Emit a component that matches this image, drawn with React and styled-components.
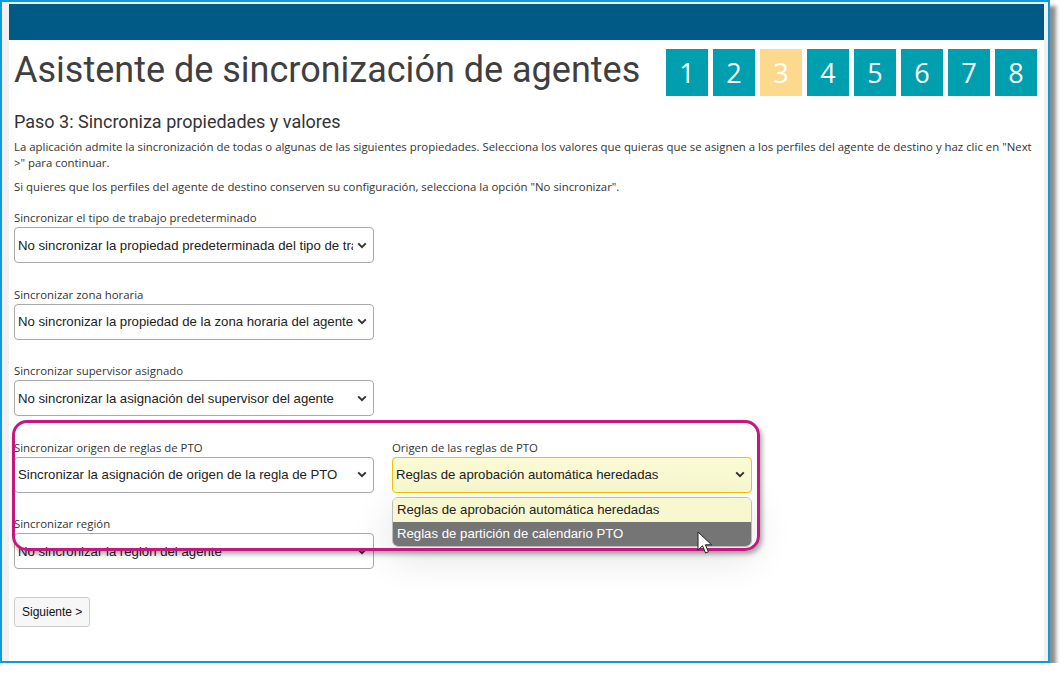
import React from 'react';
import styled, {createGlobalStyle} from 'styled-components';

const GlobalStyle = createGlobalStyle`
    html, body {
        margin: 0;
        padding: 0;
        background: #ffffff;
    }
    * {
        box-sizing: border-box;
    }
`

const steps = [1, 2, 3, 4, 5, 6, 7, 8];

const Chevron = () => (
    <svg width="10" height="7" viewBox="0 0 10 7">
        <path d="M1.2 1.4 L5 5.2 L8.8 1.4" fill="none" stroke="#333" strokeWidth="2" />
    </svg>
);

const Cursor = () => (
    <svg width="18" height="26" viewBox="0 0 18 26">
        <path d="M1 1 L1 19 L5.5 14.8 L8.6 22 L11.4 20.8 L8.4 13.8 L14.6 13.8 Z"
            fill="#ffffff" stroke="#222" strokeWidth="1" strokeLinejoin="round" />
    </svg>
);

const Field = ({label, value, tone}) => (
    <FieldBlock>
        <Label>{label}</Label>
        <SelectBox $tone={tone}>
            <SelectText>{value}</SelectText>
            <Chevron />
        </SelectBox>
    </FieldBlock>
);

const App = () => {
    return (
        <>
        <GlobalStyle />
        <Frame>
            <Page>
                <Banner />
                <Content>
                    <TitleRow>
                        <Title>Asistente de sincronización de agentes</Title>
                        <Steps>
                            {steps.map(n => (
                                <Step key={n} $current={n === 3}>{n}</Step>
                            ))}
                        </Steps>
                    </TitleRow>
                    <Subtitle>Paso 3: Sincroniza propiedades y valores</Subtitle>
                    <Text>La aplicación admite la sincronización de todas o algunas de las siguientes propiedades. Selecciona los valores que quieras que se asignen a los perfiles del agente de destino y haz clic en "Next &gt;" para continuar.</Text>
                    <Text>Si quieres que los perfiles del agente de destino conserven su configuración, selecciona la opción "No sincronizar".</Text>

                    <Fields>
                        <Field label="Sincronizar el tipo de trabajo predeterminado" value="No sincronizar la propiedad predeterminada del tipo de trabajo" />
                        <Field label="Sincronizar zona horaria" value="No sincronizar la propiedad de la zona horaria del agente" />
                        <Field label="Sincronizar supervisor asignado" value="No sincronizar la asignación del supervisor del agente" />
                        <Row>
                            <Field label="Sincronizar origen de reglas de PTO" value="Sincronizar la asignación de origen de la regla de PTO" />
                            <RightCol>
                                <Field label="Origen de las reglas de PTO" value="Reglas de aprobación automática heredadas" tone="focus" />
                                <OptionList>
                                    <Option>Reglas de aprobación automática heredadas</Option>
                                    <Option $hover>Reglas de partición de calendario PTO</Option>
                                </OptionList>
                                <CursorSpot><Cursor /></CursorSpot>
                            </RightCol>
                        </Row>
                        <Field label="Sincronizar región" value="No sincronizar la región del agente" />
                        <Highlight />
                    </Fields>

                    <Button>Siguiente &gt;</Button>
                </Content>
            </Page>
        </Frame>
        </>
    )
};

const Frame = styled.div`
    width: 1050px;
    height: 663px;
    border: 2px solid #0a9bd8;
    background: #f1f1f1;
    padding: 2px 4px 0 7px;
    box-shadow: 6px 6px 4px rgba(0,0,0,.45);
`

const Page = styled.div`
    height: 100%;
    background: #ffffff;
`

const Banner = styled.div`
    height: 36px;
    background: #015a86;
`

const Content = styled.div`
    padding: 0 7px 0 5px;
`

const TitleRow = styled.div`
    display: flex;
    justify-content: space-between;
    align-items: flex-start;
    height: 70px;
`

const Title = styled.h1`
    margin: 4px 0 0;
    font-family: Roboto, "Liberation Sans", sans-serif;
    font-weight: 400;
    font-size: 36px;
    line-height: 52px;
    color: #3f3f3f;
`

const Steps = styled.div`
    display: flex;
    gap: 5px;
    margin-top: 9px;
`

const Step = styled.div`
    width: 42px;
    height: 47px;
    display: flex;
    align-items: center;
    justify-content: center;
    background: ${p => p.$current ? '#fdd98e' : '#009faf'};
    color: #ffffff;
    font-family: "Open Sans", sans-serif;
    font-size: 27px;
`

const Subtitle = styled.h2`
    margin: 0;
    font-family: Roboto, "Liberation Sans", sans-serif;
    font-weight: 400;
    font-size: 18px;
    line-height: 24px;
    color: #333;
`

const Text = styled.p`
    margin: 5px 0 8px;
    font-family: "Open Sans", sans-serif;
    font-size: 11.4px;
    line-height: 16px;
    color: #333;
`

const Fields = styled.div`
    position: relative;
    display: flex;
    flex-direction: column;
    gap: 23.5px;
    margin-top: 15px;
`

const FieldBlock = styled.div`
    display: flex;
    flex-direction: column;
    gap: 1px;
    width: 360px;
`

const Label = styled.label`
    font-family: "Open Sans", sans-serif;
    font-size: 11.4px;
    line-height: 16px;
    color: #333;
`

const SelectBox = styled.div`
    display: flex;
    align-items: center;
    gap: 4px;
    height: 36px;
    padding: 0 6px 0 3px;
    border: 1px solid ${p => p.$tone === 'focus' ? '#f2c200' : '#a9a9a9'};
    border-radius: 4px;
    background: ${p => p.$tone === 'focus' ? '#f9f9d2' : '#ffffff'};
    font-family: "Liberation Sans", Arial, sans-serif;
    font-size: 13.2px;
    color: #222;
`

const SelectText = styled.span`
    flex: 1;
    white-space: nowrap;
    overflow: hidden;
`

const Row = styled.div`
    display: flex;
    gap: 18px;
`

const RightCol = styled.div`
    position: relative;
`

const OptionList = styled.div`
    position: absolute;
    top: 57px;
    left: 0;
    width: 360px;
    border: 1px solid #bdbdbd;
    border-radius: 6px;
    overflow: hidden;
    box-shadow: 0 10px 40px rgba(0,0,0,.12);
    z-index: 2;
`

const Option = styled.div`
    height: 24px;
    line-height: 24px;
    padding: 0 4px;
    background: ${p => p.$hover ? '#757575' : '#f8f8d0'};
    color: ${p => p.$hover ? '#ffffff' : '#222'};
    font-family: "Liberation Sans", Arial, sans-serif;
    font-size: 13.2px;
`

const CursorSpot = styled.div`
    position: absolute;
    left: 305px;
    top: 91px;
    z-index: 4;
`

const Highlight = styled.div`
    position: absolute;
    left: -2px;
    top: 210px;
    width: 748px;
    height: 131px;
    border: 3px solid #c5177f;
    border-radius: 15px;
    box-shadow: 2px 3px 5px rgba(0,0,0,.35);
    pointer-events: none;
    z-index: 3;
`

const Button = styled.button`
    margin-top: 28px;
    height: 30px;
    padding: 0 7px;
    background: #f7f7f7;
    border: 1px solid #cccccc;
    border-radius: 3px;
    font-family: "Liberation Sans", Arial, sans-serif;
    font-size: 12px;
    color: #111;
`

export default App;
